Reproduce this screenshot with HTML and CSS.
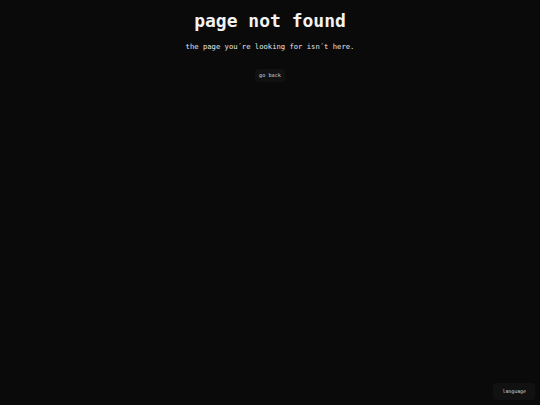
FILE: index.html
```html
<!DOCTYPE html>
<html>
<head>
<meta charset="utf-8">
<link rel="stylesheet" href="styles.css">
</head>
<body>
<main class="page">
  <h1 class="title">page not found</h1>
  <p class="subtitle">the page you´re looking for isn´t here.</p>
  <a class="btn" href="#">go back</a>
</main>
<footer class="footer">
  <button class="btn lang">language</button>
</footer>
</body>
</html>
```
FILE: styles.css
```css
html, body {
  margin: 0;
  height: 100%;
  background: #0a0a0a;
  color: #f2f2f2;
  font-family: "DejaVu Sans Mono", "Liberation Mono", monospace;
}
body {
  display: flex;
  flex-direction: column;
}
.page {
  flex: 1;
  display: flex;
  flex-direction: column;
  align-items: center;
  padding-top: 10px;
}
.title {
  margin: 0;
  font-size: 18px;
  line-height: 22px;
  font-weight: bold;
}
.subtitle {
  margin: 10px 0 0;
  font-size: 7.2px;
  line-height: 10px;
  color: #e6e6e6;
}
.btn {
  display: inline-block;
  margin-top: 17px;
  padding: 3px 4px;
  font-family: inherit;
  font-size: 5.2px;
  line-height: 7px;
  color: #d8d8d8;
  background: #111111;
  border: 0;
  border-radius: 3px;
  text-decoration: none;
}
.footer {
  display: flex;
  justify-content: flex-end;
  padding: 0 5px 5px 0;
}
.lang {
  margin: 0;
  padding: 5px 9px;
  font-size: 4.9px;
}
```
